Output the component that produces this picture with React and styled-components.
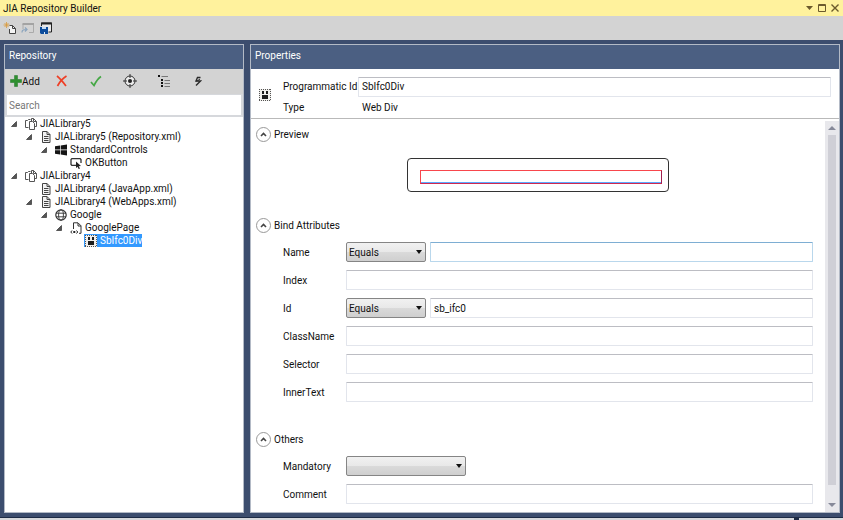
import { useState } from 'react'
import styled, { createGlobalStyle } from 'styled-components'

const GlobalStyle = createGlobalStyle`
    * {
        box-sizing: border-box;
    }
    body {
        margin: 0;
        color: #111;
        background-color: #d8d9dc;
        font-family: Roboto, "Open Sans", sans-serif;
        font-size: 10px;
        line-height: 13px;
    }
    button, input, select {
        margin: 0;
        color: inherit;
        font: inherit;
    }
`

const NewIcon = () => (
    <svg width="14" height="14" viewBox="0 0 14 14" fill="none">
        <path d="M6.500 4.500h3l3 3v5h-6V8" fill="#f4f4f4" stroke="#444" />
        <path d="M9.500 4.500v3h3" stroke="#444" />
        <path d="M3.500 1v6M.5 4h6M1.500 2l4 4M5.500 2l-4 4" stroke="#d99a3c" strokeWidth="0.800" />
    </svg>
)

const OpenIcon = () => (
    <svg width="14" height="14" viewBox="0 0 14 14" fill="none">
        <path d="M2 8V3h10.500v8.500H8" stroke="#aaa" />
        <path d="M1.500 3h11.500" stroke="#a3a3a3" strokeWidth="2" />
        <path d="M1 11.500c0-2 1-3 4-3M4 6.500l2 2-2 2" stroke="#8ba4bd" strokeWidth="1.200" />
    </svg>
)

const SaveIcon = () => (
    <svg width="14" height="14" viewBox="0 0 14 14" fill="none">
        <path d="M2.500 5V2h10v9H9.500" fill="#e8e8e8" stroke="#222" />
        <path d="M2 2.500h11" stroke="#222" strokeWidth="2" />
        <path d="M1 6h8v7H2l-1-1z" fill="#0c4c9c" />
        <path d="M3 6h4v2H3z" fill="#c6dcf5" />
        <path d="M5 11h1v2H5z" fill="#dbe9f8" />
    </svg>
)

const PlusIcon = () => (
    <svg width="12" height="12" viewBox="0 0 12 12">
        <path d="M4.500 .5h3v4h4v3h-4v4h-3v-4h-4v-3h4z" fill="#2f8f2f" stroke="#1f7426" strokeWidth="0.500" />
    </svg>
)

const DeleteIcon = () => (
    <svg width="12" height="12" viewBox="0 0 12 12" fill="none">
        <path d="M1 1c3 2.500 6 6 9 10M10.500 1C6.500 3.500 3.500 7 1.500 11" stroke="#ee3f26" strokeWidth="1.700" />
    </svg>
)

const CheckIcon = () => (
    <svg width="12" height="12" viewBox="0 0 12 12" fill="none">
        <path d="M1 7l3 3.500C6 6.500 8 3.500 11 1.500" stroke="#45a845" strokeWidth="1.700" />
    </svg>
)

const TargetIcon = () => (
    <svg width="14" height="14" viewBox="0 0 14 14" fill="none" stroke="#333">
        <circle cx="7" cy="7" r="5" fill="#ececec" />
        <circle cx="7" cy="7" r="2" fill="#222" stroke="none" />
        <path d="M7 0v4M7 10v4M0 7h4M10 7h4" />
    </svg>
)

const OutlineIcon = () => (
    <svg width="12" height="12" viewBox="0 0 12 12" fill="none">
        <path d="M0 1h2M3 5h2M3 8h2M3 11h2" stroke="#111" strokeWidth="2" />
        <path d="M3.500 1.500H10M6.500 5.500H12M6.500 8.500H12M6.500 11.500H12" stroke="#777" />
    </svg>
)

const BoltIcon = () => (
    <svg width="8" height="10" viewBox="0 0 8 10" fill="none">
        <path d="M6.500 1.500H3.500L2 5h4.500L2 9.500" stroke="#2b2b2b" strokeWidth="1.400" />
        <path d="M6 3L2.500 5.500" stroke="#2b2b2b" />
    </svg>
)

const LibraryIcon = () => (
    <svg width="12" height="12" viewBox="0 0 12 12" fill="none" stroke="#555">
        <path d="M3.500 9.500h-3v-7h2l1-1h2" />
        <path d="M6.500 3.500V.5h2l3 3v5h-2" fill="#fff" />
        <path d="M4.500 3.500h3l2 2v6h-5z" fill="#fff" />
        <path d="M8.500 .5v3h3" />
    </svg>
)

const FileIcon = () => (
    <svg width="12" height="12" viewBox="0 0 12 12" fill="none" stroke="#444">
        <path d="M2.500 .5h4.500l3 3v8H2.500z" fill="#f2f2f2" />
        <path d="M7 .5v3h3M4 5.500h4.500M4 7.500h4.500M4 9.500h4.500" />
    </svg>
)

const WindowsIcon = () => (
    <svg width="12" height="12" viewBox="0 0 12 12" fill="#151515">
        <path d="M0 2.300L5 1.500v4H0zM5.700 1.400L12 .5v5H5.700zM0 6.300h5v4.200l-5-.8zM5.700 6.300H12v5.200l-6.300-.9z" />
    </svg>
)

const ButtonIcon = () => (
    <svg width="12" height="12" viewBox="0 0 12 12" fill="none">
        <path d="M6 8.300H1.800L1 7.500v-5l.8-.8h8.400l.8.800V6" stroke="#333" strokeWidth="1.300" />
        <path d="M6 4.500l5 4.500-2.300.2 1.300 2.300-1.300.5-1.200-2.300L6 11z" fill="#222" />
    </svg>
)

const GlobeIcon = () => (
    <svg width="12" height="12" viewBox="0 0 12 12" fill="none" stroke="#333" strokeWidth="0.900">
        <circle cx="6" cy="6" r="5.200" strokeWidth="1.200" />
        <ellipse cx="6" cy="6" rx="2.400" ry="5.200" />
        <path d="M1 4.200h10M1 7.800h10" />
    </svg>
)

const PageIcon = () => (
    <svg width="12" height="12" viewBox="0 0 12 12" fill="none">
        <path d="M3.500 7V.8h4.500l3 3v7.500H9" stroke="#333" />
        <path d="M8 1v3h3" stroke="#333" />
        <path d="M2 8.500L.8 10 2 11.500M6.500 8.500L7.700 10l-1.200 1.500" stroke="#222" />
        <path d="M3.300 10h2" stroke="#222" strokeWidth="2" />
    </svg>
)

const DivIcon = () => (
    <svg width="12" height="12" viewBox="0 0 12 12" fill="none">
        <path d="M0 0h12v12H0z" fill="#f1efec" />
        <path d="M0 .5h12M0 11.500h12M.5 0v12M11.500 0v12" stroke="#555" strokeDasharray="1 1" />
        <path d="M3 2h2v3H3zM7 2h2v3H7zM3 6h6v4H3z" fill="#1c1c1c" />
    </svg>
)

const tree = [
    { level: 0, name: 'JIALibrary5', Icon: LibraryIcon, open: true },
    { level: 1, name: 'JIALibrary5 (Repository.xml)', Icon: FileIcon, open: true },
    { level: 2, name: 'StandardControls', Icon: WindowsIcon, open: true },
    { level: 3, name: 'OKButton', Icon: ButtonIcon },
    { level: 0, name: 'JIALibrary4', Icon: LibraryIcon, open: true },
    { level: 1, name: 'JIALibrary4 (JavaApp.xml)', Icon: FileIcon },
    { level: 1, name: 'JIALibrary4 (WebApps.xml)', Icon: FileIcon, open: true },
    { level: 2, name: 'Google', Icon: GlobeIcon, open: true },
    { level: 3, name: 'GooglePage', Icon: PageIcon, open: true },
    { level: 4, name: 'SbIfc0Div', Icon: DivIcon },
]

const attributes = [
    { name: 'Name', operator: true, active: true },
    { name: 'Index' },
    { name: 'Id', operator: true, value: 'sb_ifc0' },
    { name: 'ClassName' },
    { name: 'Selector' },
    { name: 'InnerText' },
]

const Section = ({ title, children }) => {
    const [open, setOpen] = useState(true)

    return (
        <SectionWrapper>
            <SectionTitle>
                <Toggle type="button" aria-expanded={open} onClick={() => setOpen(!open)}>
                    <Circle>
                        <svg width="7" height="5" viewBox="0 0 7 5" fill="none">
                            <path d={open ? 'M1 4l2.500-2.500L6 4' : 'M1 1l2.500 2.500L6 1'} stroke="#444" strokeWidth="1.600" />
                        </svg>
                    </Circle>
                    {title}
                </Toggle>
            </SectionTitle>
            {open && children}
        </SectionWrapper>
    )
}

const Combo = ({ id, label, options, wide }) => (
    <ComboWrapper $wide={wide}>
        <ComboSelect id={id} aria-label={label}>
            {options.map(option => <option key={option}>{option}</option>)}
        </ComboSelect>
        <ComboArrow width="6" height="4" viewBox="0 0 6 4">
            <path d="M0 0h6L3 4z" fill="#111" />
        </ComboArrow>
    </ComboWrapper>
)

const App = () => {
    const [selected, setSelected] = useState('SbIfc0Div')

    return (
        <>
            <GlobalStyle />
            <Window>
                <TitleBar>
                    <WindowTitle>JIA Repository Builder</WindowTitle>
                    <WindowButton type="button" aria-label="Window position">
                        <svg width="7" height="4" viewBox="0 0 7 4"><path d="M0 0h7L3.500 4z" fill="#6b5a2c" /></svg>
                    </WindowButton>
                    <WindowButton type="button" aria-label="Maximize">
                        <svg width="8" height="8" viewBox="0 0 8 8" fill="none" stroke="#6b5a2c">
                            <path d="M.5 .5h7v7h-7zM0 1.500h8" />
                        </svg>
                    </WindowButton>
                    <WindowButton type="button" aria-label="Close">
                        <svg width="8" height="8" viewBox="0 0 8 8" stroke="#6b5a2c" strokeWidth="1.400">
                            <path d="M.5 .5l7 7M7.500 .5l-7 7" />
                        </svg>
                    </WindowButton>
                </TitleBar>
                <MainToolbar>
                    <IconButton type="button" aria-label="New"><NewIcon /></IconButton>
                    <IconButton type="button" aria-label="Open" disabled><OpenIcon /></IconButton>
                    <IconButton type="button" aria-label="Save"><SaveIcon /></IconButton>
                </MainToolbar>
                <Workspace>
                    <RepositoryPanel>
                        <PanelTitle>Repository</PanelTitle>
                        <TreeToolbar>
                            <AddButton type="button"><PlusIcon />Add</AddButton>
                            <TreeTools>
                                <IconButton type="button" aria-label="Delete"><DeleteIcon /></IconButton>
                                <IconButton type="button" aria-label="Validate"><CheckIcon /></IconButton>
                                <IconButton type="button" aria-label="Locate"><TargetIcon /></IconButton>
                                <IconButton type="button" aria-label="Outline"><OutlineIcon /></IconButton>
                                <IconButton type="button" aria-label="Run"><BoltIcon /></IconButton>
                            </TreeTools>
                        </TreeToolbar>
                        <SearchBar>
                            <SearchInput type="search" placeholder="Search" aria-label="Search" />
                        </SearchBar>
                        <Tree role="tree">
                            {tree.map(({ level, name, Icon, open }) => (
                                <TreeRow
                                    key={name}
                                    role="treeitem"
                                    aria-level={level + 1}
                                    aria-selected={name === selected}
                                    $level={level}
                                    onClick={() => setSelected(name)}
                                >
                                    <Expander>
                                        {open && <svg width="6" height="6" viewBox="0 0 6 6"><path d="M5.500 .5v5h-5z" fill="#555" stroke="#333" strokeWidth="0.700" /></svg>}
                                    </Expander>
                                    <TreeLabel $selected={name === selected}><Icon /><span>{name}</span></TreeLabel>
                                </TreeRow>
                            ))}
                        </Tree>
                    </RepositoryPanel>
                    <PropertiesPanel>
                        <PanelTitle>Properties</PanelTitle>
                        <Summary>
                            <DivIcon />
                            <SummaryFields>
                                <label htmlFor="programmaticId">Programmatic Id</label>
                                <TextInput id="programmaticId" defaultValue="SbIfc0Div" />
                                <span>Type</span>
                                <SummaryValue>Web Div</SummaryValue>
                            </SummaryFields>
                        </Summary>
                        <ScrollArea>
                            <Sections>
                                <Section title="Preview">
                                    <PreviewFrame><PreviewElement /></PreviewFrame>
                                </Section>
                                <Section title="Bind Attributes">
                                    <Fields>
                                        {attributes.map(({ name, operator, active, value }) => (
                                            <Field key={name}>
                                                <label htmlFor={name}>{name}</label>
                                                {operator && <Combo label={name + ' operator'} options={['Equals', 'Contains']} />}
                                                <TextInput id={name} defaultValue={value} $active={active} />
                                            </Field>
                                        ))}
                                    </Fields>
                                </Section>
                                <Section title="Others">
                                    <Fields>
                                        <Field>
                                            <label htmlFor="mandatory">Mandatory</label>
                                            <Combo id="mandatory" options={['', 'True', 'False']} wide />
                                        </Field>
                                        <Field>
                                            <label htmlFor="comment">Comment</label>
                                            <TextInput id="comment" />
                                        </Field>
                                    </Fields>
                                </Section>
                            </Sections>
                            <ScrollBar>
                                <svg width="8" height="4" viewBox="0 0 8 4"><path d="M0 4h8L4 0z" fill="#868999" /></svg>
                                <ScrollThumb />
                                <svg width="8" height="4" viewBox="0 0 8 4"><path d="M0 0h8L4 4z" fill="#868999" /></svg>
                            </ScrollBar>
                        </ScrollArea>
                    </PropertiesPanel>
                </Workspace>
                <BottomEdge><EdgeMark /></BottomEdge>
            </Window>
        </>
    )
}

export default App

const Window = styled.div`
    display: flex;
    flex-direction: column;
    min-height: 100vh;
`
const TitleBar = styled.header`
    display: flex;
    align-items: center;
    gap: 5px;
    height: 16px;
    padding: 0 4px 0 3px;
    background-color: #fff29d;
`
const WindowTitle = styled.h1`
    flex: 1;
    margin: 0;
    font-size: 10px;
    font-weight: 400;
`
const WindowButton = styled.button`
    display: flex;
    padding: 0;
    border: 0;
    background: none;
`
const MainToolbar = styled.div`
    display: flex;
    align-items: center;
    gap: 4px;
    height: 24px;
    padding: 0 3px;
    background-color: #d3d3d3;
`
const IconButton = styled.button`
    display: flex;
    justify-content: center;
    width: 14px;
    padding: 0;
    border: 0;
    background: none;
`
const Workspace = styled.main`
    display: flex;
    flex: 1;
    gap: 6px;
    padding: 4px 3px 4px 4px;
    background-color: #3c4d6e;
    border-bottom: 1px solid #1d2b45;
`
const BottomEdge = styled.footer`
    display: flex;
    justify-content: flex-end;
    height: 2px;
    padding-right: 44px;
`
const EdgeMark = styled.span`
    width: 5px;
    background-color: #1d2b45;
`
const Panel = styled.section`
    display: flex;
    flex-direction: column;
    background-color: #fff;
    border: 1px solid #b3bac6;
`
const RepositoryPanel = styled(Panel)`
    flex: 0 0 240px;
`
const PropertiesPanel = styled(Panel)`
    flex: 1;
    min-width: 0;
`
const PanelTitle = styled.h2`
    margin: 0;
    padding: 4px;
    height: 24px;
    color: #fff;
    background-color: #4b5f82;
    font-size: 10px;
    font-weight: 400;
`
const TreeToolbar = styled.div`
    display: flex;
    align-items: center;
    height: 25px;
    padding: 0 5px 1px;
    background-color: #d3d3d3;
`
const AddButton = styled.button`
    display: flex;
    align-items: center;
    width: 45px;
    padding: 0;
    border: 0;
    background: none;
`
const TreeTools = styled.div`
    display: flex;
    align-items: center;
    gap: 20px;
`
const SearchBar = styled.div`
    padding: 1px 2px 2px;
    background-color: #d6d8dc;
`
const SearchInput = styled.input`
    display: block;
    width: 100%;
    height: 20px;
    padding: 0 1px;
    border: 1px solid #fff;
    background-color: #fff;
    &::placeholder {
        color: #777;
        opacity: 1;
    }
`
const Tree = styled.ul`
    margin: 0;
    padding: 0;
    list-style: none;
`
const TreeRow = styled.li`
    display: flex;
    align-items: center;
    height: 13px;
    padding-left: ${props => props.$level * 15 + 6}px;
    white-space: nowrap;
`
const Expander = styled.span`
    display: flex;
    width: 13px;
`
const TreeLabel = styled.span`
    display: flex;
    align-items: center;
    gap: 3px;
    height: 13px;
    padding-left: 1px;
    color: ${props => props.$selected ? '#fff' : 'inherit'};
    background-color: ${props => props.$selected ? '#3399ff' : 'transparent'};
`
const Summary = styled.div`
    display: flex;
    align-items: center;
    gap: 12px;
    height: 50px;
    padding: 3px 8px 0;
    border-bottom: 1px solid #b9b9b9;
`
const SummaryFields = styled.div`
    display: grid;
    flex: 1;
    grid-template-columns: 75px 1fr;
    align-items: center;
    row-gap: 4px;
    white-space: nowrap;
`
const SummaryValue = styled.span`
    padding-left: 4px;
`
const TextInput = styled.input`
    flex: 1;
    width: 100%;
    min-width: 0;
    height: 20px;
    padding: 0 3px;
    border: 1px solid ${props => props.$active ? '#b9d7ec' : '#e2e5ec'};
    border-top-color: ${props => props.$active ? '#7eaed3' : '#bcbdc3'};
    border-radius: 1px;
    background-color: #fff;
`
const ScrollArea = styled.div`
    display: flex;
    flex: 1;
`
const Sections = styled.div`
    flex: 1;
    min-width: 0;
    padding: 7px 0 8px;
`
const SectionWrapper = styled.section`
    & + & {
        margin-top: 25px;
    }
    & + &:last-child {
        margin-top: 29px;
    }
`
const SectionTitle = styled.h3`
    margin: 0 0 9px;
    font-size: 10px;
    font-weight: 400;
`
const Toggle = styled.button`
    display: flex;
    align-items: center;
    gap: 3px;
    height: 16px;
    padding: 0 5px;
    border: 0;
    background: none;
`
const Circle = styled.span`
    display: flex;
    align-items: center;
    justify-content: center;
    width: 15px;
    height: 15px;
    border: 1px solid #999;
    border-radius: 50%;
`
const PreviewFrame = styled.div`
    width: 262px;
    height: 34px;
    margin: 16px auto 0;
    padding: 11px 6px 7px 12px;
    border: 1px solid #333;
    border-radius: 4px;
`
const PreviewElement = styled.div`
    height: 14px;
    border: 1px solid #f8464c;
    border-right-color: #a02050;
    border-bottom-color: #d02850;
    box-shadow: inset 0 -1px #5aabff;
`
const Fields = styled.div`
    display: grid;
    gap: 8px;
`
const Field = styled.div`
    display: flex;
    align-items: center;
    padding: 0 12px 0 32px;
    & > label {
        flex: 0 0 63px;
    }
`
const ComboWrapper = styled.div`
    position: relative;
    flex: 0 0 ${props => props.$wide ? '120px' : '80px'};
    margin-right: 4px;
`
const ComboSelect = styled.select`
    display: block;
    width: 100%;
    height: 20px;
    padding: 0 2px;
    appearance: none;
    border: 1px solid #858585;
    border-radius: 2px;
    background: linear-gradient(#f1f1f1, #e8e8e8 50%, #dadada 50%, #cfcfcf);
`
const ComboArrow = styled.svg`
    position: absolute;
    top: 8px;
    right: 4px;
    pointer-events: none;
`
const ScrollBar = styled.div`
    display: flex;
    flex-direction: column;
    align-items: center;
    gap: 5px;
    width: 14px;
    margin-top: 2px;
    padding: 5px 0;
    background-color: #e8e8ec;
`
const ScrollThumb = styled.div`
    flex: 1;
    width: 8px;
    margin-bottom: 13px;
    background-color: #cfcfd6;
`
